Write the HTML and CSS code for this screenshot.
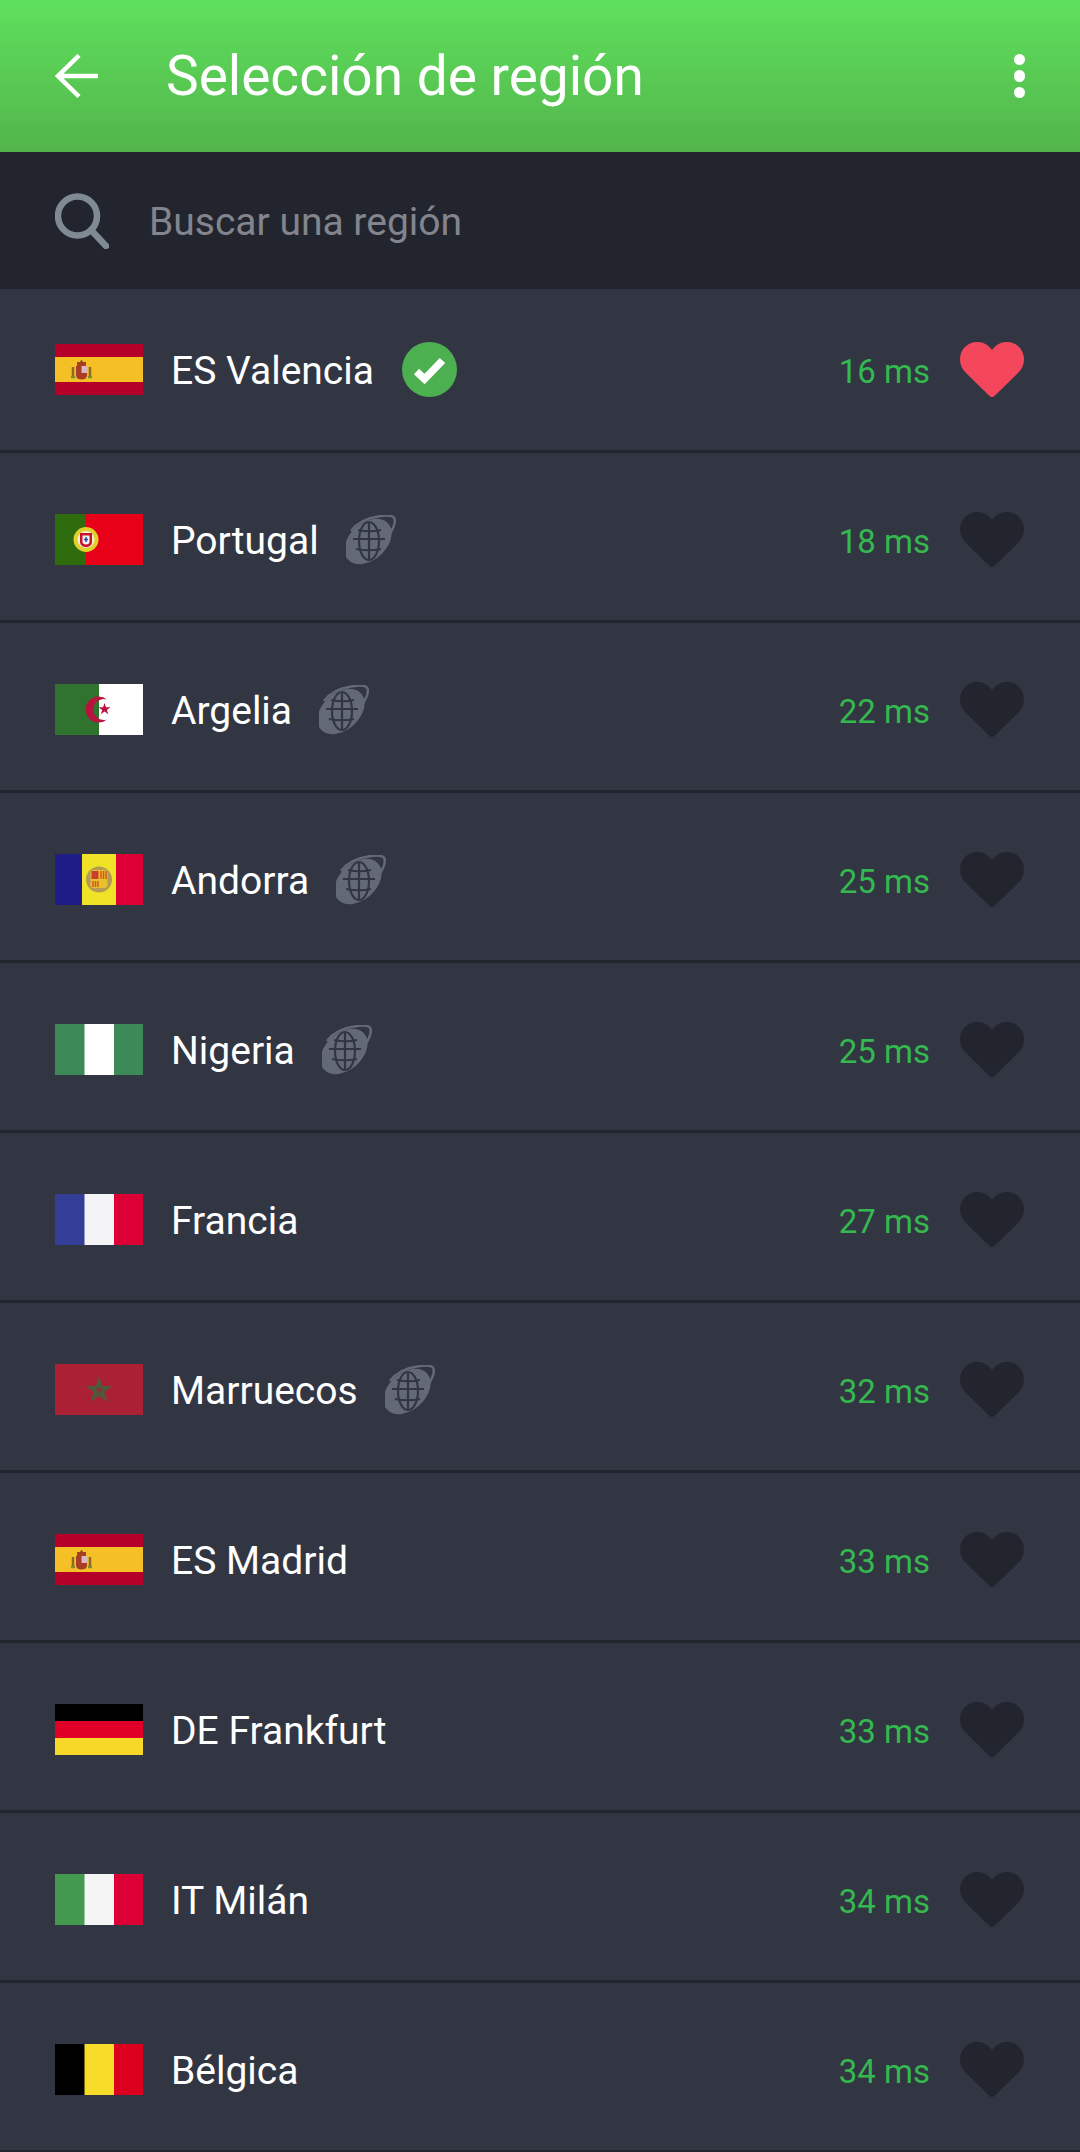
FILE: index.html
```html
<!DOCTYPE html>
<html lang="es">
<head>
  <meta charset="UTF-8" />
  <meta name="viewport" content="width=device-width, initial-scale=1.0" />
  <title>Selección de región</title>
  <link rel="stylesheet" href="styles.css">
</head>
<body>
  <svg class="defs" width="0" height="0">
    <symbol id="heart" viewBox="0 0 64 55">
      <path d="M32 55c-1 0-2-.5-3-1.500L6 31C2 27 0 22.500 0 17.500 0 7.500 7.500 0 17 0c6 0 11 2.500 15 8 4-5.500 9-8 15-8 9.500 0 17 7.500 17 17.500 0 5-2 9.500-6 13.500L35 53.500c-1 1-2 1.500-3 1.500z"/>
    </symbol>
    <symbol id="globe" viewBox="0 0 50 50">
      <path class="orbit" d="M5 16C11 8 22 3 32 1.500 40 0 47 0 48.500 3.500 49.500 7 47 14 43 20"/>
      <ellipse class="earth" cx="22" cy="26.500" rx="27" ry="18.500" transform="rotate(-42 22 26.500)"/>
      <g class="grid">
        <ellipse cx="23" cy="26" rx="10" ry="19"/>
        <path d="M23 7v38M7 24h32M12 15c7 1.500 16 1.500 23 0M10 34c8 1.500 18 1.500 25 0"/>
      </g>
    </symbol>
    <symbol id="flag-es" viewBox="0 0 88 51">
      <rect width="88" height="51" fill="#b5002a"/>
      <rect y="13" width="88" height="25" fill="#f4c025"/>
      <path d="M21 22h11v9c0 3-2 4.500-5.500 4.500S21 34 21 31z" fill="#a83c24"/>
      <rect x="26.500" y="22" width="5.500" height="7" fill="#d9b8c0"/>
      <rect x="22" y="18" width="9" height="4" fill="#a8401f"/>
      <path d="M25.500 16.500h2v2h-2z" fill="#7a3a20"/>
      <path d="M18 23v9M35 23v9" stroke="#8f6a25" stroke-width="2.500"/>
      <path d="M16 33h4M33 33h4" stroke="#7f8a30" stroke-width="2.500"/>
    </symbol>
  </svg>

  <header class="topbar">
    <svg class="back" viewBox="0 0 44 44"><path d="M43 22H3M24 1.500 3 22l21 20.500"/></svg>
    <h1>Selección de región</h1>
    <div class="more"><i></i><i></i><i></i></div>
  </header>

  <div class="search">
    <svg class="lens" viewBox="0 0 54 56"><circle cx="22.500" cy="23" r="19.500"/><path d="M36 37l15 16"/></svg>
    <span>Buscar una región</span>
  </div>

  <ul class="regions">
    <li class="row">
      <svg class="flag"><use href="#flag-es"/></svg>
      <span class="name">ES Valencia</span>
      <svg class="check" viewBox="0 0 55 55"><circle cx="27.500" cy="27.500" r="27.500"/><path d="M14.500 29.500l8 7.500 18-18.500"/></svg>
      <span class="ping">16 ms</span>
      <svg class="heart on"><use href="#heart"/></svg>
    </li>
    <li class="row">
      <svg class="flag" viewBox="0 0 88 51"><rect width="88" height="51" fill="#e70018"/><rect width="31" height="51" fill="#2f6c0e"/><circle cx="31" cy="25.500" r="12.500" fill="#e3d02c"/><circle cx="31" cy="25.500" r="8.500" fill="#f6f0d0"/><path d="M25 19h12v9c0 3-3 5-6 5s-6-2-6-5z" fill="#c8142a"/><path d="M27.500 21.500h7v6.500c0 1.500-1.500 2.500-3.500 2.500s-3.500-1-3.500-2.500z" fill="#f4f4f4"/><path d="M31 23v5M29 25.500h4" stroke="#2a4aa0" stroke-width="1.500"/></svg>
      <span class="name">Portugal</span>
      <svg class="globe"><use href="#globe"/></svg>
      <span class="ping">18 ms</span>
      <svg class="heart"><use href="#heart"/></svg>
    </li>
    <li class="row">
      <svg class="flag" viewBox="0 0 88 51"><rect width="88" height="51" fill="#fff"/><rect width="44" height="51" fill="#2f732f"/><path d="M52 15.500A13 13 0 1 0 52 35.500 10.500 10.500 0 1 1 52 15.500z" fill="#b8123e"/><path d="M49.500 19l1.500 4.300 4.500-.1-3.600 2.700 1.400 4.300-3.800-2.600-3.600 2.600 1.300-4.300-3.600-2.700 4.500.1z" fill="#b8123e"/></svg>
      <span class="name">Argelia</span>
      <svg class="globe"><use href="#globe"/></svg>
      <span class="ping">22 ms</span>
      <svg class="heart"><use href="#heart"/></svg>
    </li>
    <li class="row">
      <svg class="flag" viewBox="0 0 88 51"><rect width="88" height="51" fill="#f0e226"/><rect width="27" height="51" fill="#1d1d85"/><rect x="61" width="27" height="51" fill="#dc0035"/><circle cx="44" cy="25.500" r="13" fill="#b39b54"/><rect x="35.500" y="16" width="17" height="18" rx="3" fill="#e8c030"/><rect x="36.500" y="17" width="7" height="8" fill="#c9402a"/><path d="M46 17v8M48.500 17v8M51 17v8M38 27v6M40.500 27v6M43 27v6" stroke="#d8541f" stroke-width="1.500"/></svg>
      <span class="name">Andorra</span>
      <svg class="globe"><use href="#globe"/></svg>
      <span class="ping">25 ms</span>
      <svg class="heart"><use href="#heart"/></svg>
    </li>
    <li class="row">
      <svg class="flag" viewBox="0 0 88 51"><rect width="88" height="51" fill="#fff"/><rect width="29.500" height="51" fill="#3d8a58"/><rect x="59" width="29" height="51" fill="#3d8a58"/></svg>
      <span class="name">Nigeria</span>
      <svg class="globe"><use href="#globe"/></svg>
      <span class="ping">25 ms</span>
      <svg class="heart"><use href="#heart"/></svg>
    </li>
    <li class="row">
      <svg class="flag" viewBox="0 0 88 51"><rect width="88" height="51" fill="#f4f4f6"/><rect width="29.500" height="51" fill="#343e96"/><rect x="59" width="29" height="51" fill="#dc0035"/></svg>
      <span class="name">Francia</span>
      <span class="ping">27 ms</span>
      <svg class="heart"><use href="#heart"/></svg>
    </li>
    <li class="row">
      <svg class="flag" viewBox="0 0 88 51"><rect width="88" height="51" fill="#ac2036"/><path d="M44 12l3.200 10h10.300l-8.300 6 3.200 10-8.400-6.200L35.600 38l3.200-10-8.300-6h10.300z" fill="#4f5a3a"/><circle cx="44" cy="26" r="2.500" fill="#8a3036"/></svg>
      <span class="name">Marruecos</span>
      <svg class="globe"><use href="#globe"/></svg>
      <span class="ping">32 ms</span>
      <svg class="heart"><use href="#heart"/></svg>
    </li>
    <li class="row">
      <svg class="flag"><use href="#flag-es"/></svg>
      <span class="name">ES Madrid</span>
      <span class="ping">33 ms</span>
      <svg class="heart"><use href="#heart"/></svg>
    </li>
    <li class="row">
      <svg class="flag" viewBox="0 0 88 51"><rect width="88" height="51" fill="#f7d727"/><rect width="88" height="17" fill="#000"/><rect y="17" width="88" height="17" fill="#e00027"/></svg>
      <span class="name">DE Frankfurt</span>
      <span class="ping">33 ms</span>
      <svg class="heart"><use href="#heart"/></svg>
    </li>
    <li class="row">
      <svg class="flag" viewBox="0 0 88 51"><rect width="88" height="51" fill="#f5f5f5"/><rect width="29.500" height="51" fill="#439a4f"/><rect x="59" width="29" height="51" fill="#dc0035"/></svg>
      <span class="name">IT Milán</span>
      <span class="ping">34 ms</span>
      <svg class="heart"><use href="#heart"/></svg>
    </li>
    <li class="row">
      <svg class="flag" viewBox="0 0 88 51"><rect width="88" height="51" fill="#f7dc2a"/><rect width="29.500" height="51" fill="#000"/><rect x="59" width="29" height="51" fill="#dc001e"/></svg>
      <span class="name">Bélgica</span>
      <span class="ping">34 ms</span>
      <svg class="heart"><use href="#heart"/></svg>
    </li>
  </ul>
</body>
</html>
```

FILE: styles.css
```css
* {
  box-sizing: border-box;
}
body {
  margin: 0;
  height: 2152px;
  overflow: hidden;
  background: #323643;
  font-family: 'Roboto', sans-serif;
}
.defs {
  position: absolute;
}
.topbar {
  display: flex;
  align-items: center;
  height: 152px;
  padding: 0 55px 0 55px;
  background: linear-gradient(180deg, #5fe05d, #52b54b);
  color: #fff;
}
.back {
  width: 44px;
  height: 44px;
  fill: none;
  stroke: #fff;
  stroke-width: 4.500;
}
.topbar h1 {
  flex: 1;
  margin: 0 0 0 67px;
  font-size: 55px;
  font-weight: 400;
}
.more {
  display: flex;
  flex-direction: column;
  gap: 5px;
}
.more i {
  width: 11.500px;
  height: 11.500px;
  border-radius: 50%;
  background: #fff;
}
.search {
  display: flex;
  align-items: center;
  height: 137px;
  padding-left: 55px;
  background: #22252e;
  color: #82858d;
  font-size: 39px;
}
.search span {
  margin: 2px 0 0 40px;
}
.lens {
  width: 54px;
  height: 56px;
  fill: none;
  stroke: #808a94;
  stroke-width: 6.500;
  stroke-linecap: round;
}
.regions {
  margin: 0;
  padding: 0;
  list-style: none;
}
.row {
  display: flex;
  align-items: center;
  height: 164px;
  padding: 0 56px 0 55px;
  border-bottom: 3px solid #22252e;
}
.row + .row {
  height: 170px;
  padding-top: 6px;
}
.flag {
  width: 88px;
  height: 51px;
  flex: none;
}
.name {
  margin: 3px 0 0 28px;
  color: #fff;
  font-size: 39px;
}
.check {
  width: 55px;
  height: 55px;
  margin-left: 28px;
}
.check circle {
  fill: #4caf50;
}
.check path {
  fill: none;
  stroke: #fff;
  stroke-width: 7.500;
}
.globe {
  width: 50px;
  height: 50px;
  margin-left: 27px;
}
.orbit {
  fill: none;
  stroke: #636977;
  stroke-width: 2.500;
}
.earth {
  fill: #636977;
}
.grid {
  fill: none;
  stroke: #323643;
  stroke-width: 2.200;
}
.ping {
  margin: 3px 0 0 auto;
  color: #35b84f;
  font-size: 33px;
}
.heart {
  width: 64px;
  height: 55px;
  margin-left: 30px;
  fill: #22252e;
}
.heart.on {
  fill: #f4475c;
}
```
